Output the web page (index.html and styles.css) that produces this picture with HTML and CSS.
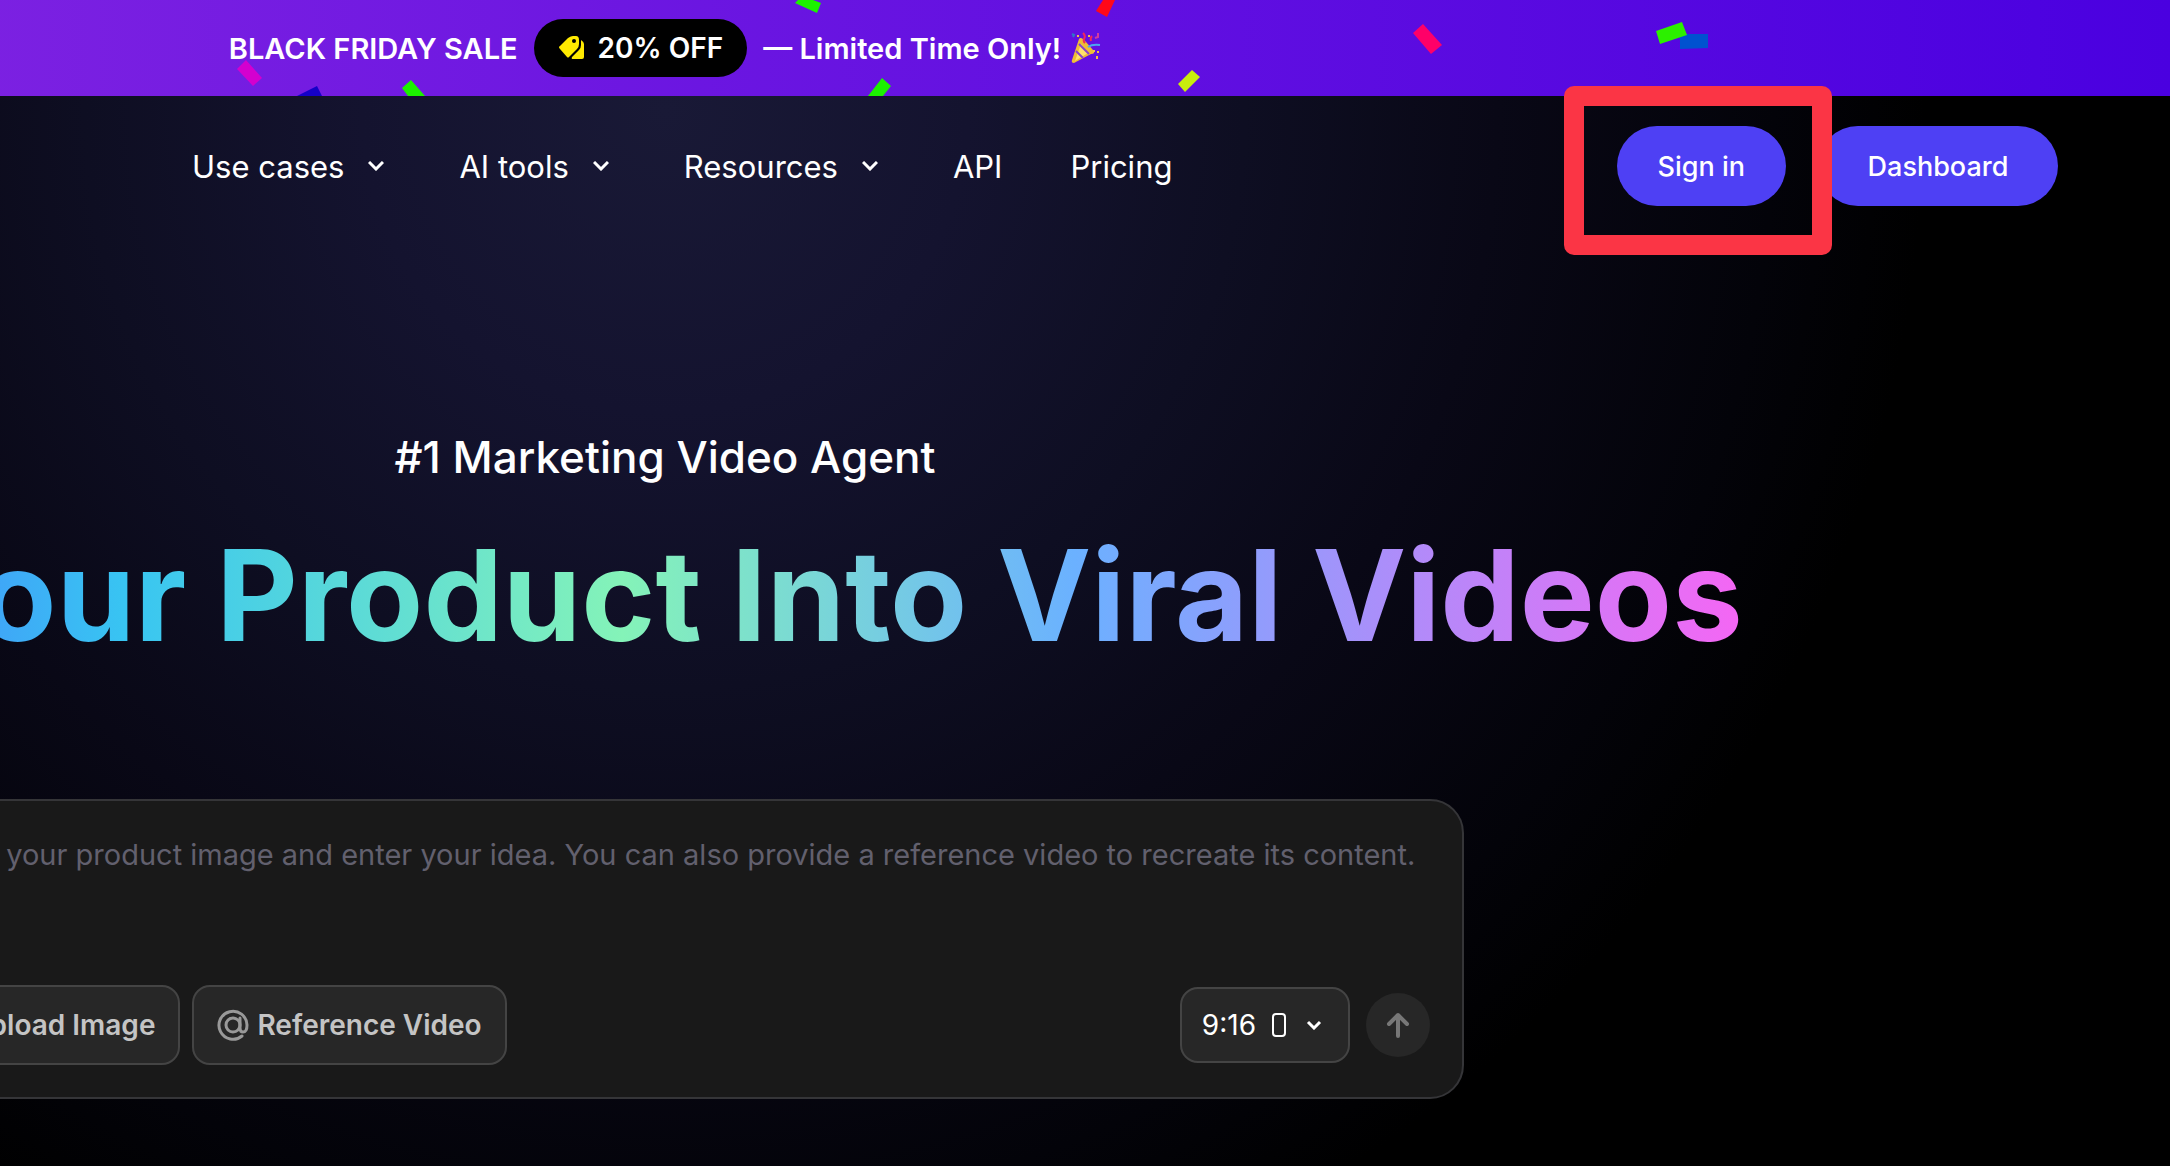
FILE: index.html
```html
<!DOCTYPE html>
<html lang="en">
  <head>
    <meta charset="UTF-8" />
    <meta name="viewport" content="width=device-width, initial-scale=1">
    <title>Marketing Video Agent</title>
    <link rel="stylesheet" href="styles.css">
  </head>
  <body>
    <div class="page">
      <div class="banner">
        <svg class="confetti" width="2170" height="96" viewBox="0 0 2170 96" aria-hidden="true">
          <path fill="#d400cf" d="M246 60 262 78 253 86 237 69z"/>
          <path fill="#1500c8" d="M297 96 317 86 322 96z"/>
          <path fill="#1cf200" d="M402 88 411 80 425 96 408 96z"/>
          <path fill="#1cf200" d="M795 3 798 0 813 0 821 3 817 13z"/>
          <path fill="#1cf200" d="M868 96 882 78 891 86 883 96z"/>
          <path fill="#ff0819" d="M1096 11 1103 0 1115 0 1107 17z"/>
          <path fill="#c8ee0c" d="M1178 84 1192 70 1200 77 1185 92z"/>
          <path fill="#ff0068" d="M1413 33 1423 24 1442 45 1431 54z"/>
          <path fill="#0052d0" d="M1680 34 1708 34 1708 48 1680 49z"/>
          <path fill="#2cf000" d="M1656 31 1682 22 1687 35 1660 44z"/>
        </svg>
        <p class="banner_txt">BLACK FRIDAY SALE</p>
        <span class="badge">
          <svg width="28" height="26" viewBox="0 0 28 26" aria-hidden="true">
            <path fill="#ffea00" d="M2 11 10 3Q13 1 15 1H18Q21 1 21 5V9Q21 12 19 14L11 22Q10 23 9 22L2 14Q0 12 2 11z"/>
            <path fill="#ffea00" d="M23 5Q26 7 26 9V22Q26 24 24 24H15Q13 24 14 22L21 15Q23 13 23 10z"/>
            <circle cx="16" cy="6" r="2" fill="#000"/>
          </svg>
          20% OFF
        </span>
        <p class="banner_txt">— Limited Time Only!
          <svg class="party" width="30" height="32" viewBox="0 0 30 32" aria-hidden="true">
            <path fill="#efbd35" d="M8 7Q10 4 15 10L22 18Q25 22 20 22L3 31Q0 31 1 28z"/>
            <path fill="#ffe36b" d="M10 12 17 21 4 29z"/>
            <path fill="none" stroke="#8b45c8" stroke-width="2" d="M8 12 18 22M5 19 12 26"/>
            <path fill="none" stroke="#f0285c" stroke-width="2" d="M12 1Q15 4 13 7Q12 9 14 11M20 9Q19 6 21 4"/>
            <path fill="none" stroke="#4da5ee" stroke-width="2" d="M17 15Q21 12 29 13"/>
            <path fill="none" stroke="#2d78c8" stroke-width="2" d="M1 2 3 3 2 5"/>
            <path fill="none" stroke="#d13a9d" stroke-width="2" d="M27 1V5L24 6"/>
            <path fill="#f2bf48" d="M6 3h2v2H6zM22 18h2v2h-2zM26 19h2v2h-2zM25 24h2v3h-2zM17 3h2v2h-2z"/>
          </svg>
        </p>
      </div>

      <header class="header">
        <nav class="nav">
          <a href="#">Use cases <svg class="arrow" width="16" height="10" viewBox="0 0 16 10" aria-hidden="true"><path d="M1 1 8 8 15 1"/></svg></a>
          <a href="#">AI tools <svg class="arrow" width="16" height="10" viewBox="0 0 16 10" aria-hidden="true"><path d="M1 1 8 8 15 1"/></svg></a>
          <a href="#">Resources <svg class="arrow" width="16" height="10" viewBox="0 0 16 10" aria-hidden="true"><path d="M1 1 8 8 15 1"/></svg></a>
          <a href="#">API</a>
          <a href="#">Pricing</a>
        </nav>
        <div class="user_menu">
          <div class="signin_wrap">
            <button type="button" class="btn">Sign in</button>
            <div class="mark"></div>
          </div>
          <button type="button" class="btn btn_wide">Dashboard</button>
        </div>
      </header>

      <main class="hero">
        <p class="sub_tit">#1 Marketing Video Agent</p>
        <h1 class="tit">Turn Your Product Into Viral Videos</h1>

        <form class="prompt">
          <textarea class="prompt_txt" rows="2" aria-label="Your idea" placeholder="Upload your product image and enter your idea. You can also provide a reference video to recreate its content."></textarea>
          <div class="prompt_bar">
            <button type="button" class="btn_opt">
              <svg width="36" height="32" viewBox="0 0 36 32" aria-hidden="true"><rect x="3" y="3" width="30" height="26" rx="4"/><path d="M4 24 13 15 24 28M20 21 25 16 32 23"/></svg>
              Upload Image
            </button>
            <button type="button" class="btn_opt">
              <svg width="32" height="32" viewBox="0 0 32 32" aria-hidden="true"><circle cx="16" cy="16" r="7"/><path d="M23 9V19Q23 23 26 23Q30 23 30 16A14 14 0 1 0 25 27"/></svg>
              Reference Video
            </button>
            <div class="send_wrap">
              <button type="button" class="btn_ratio">
                9:16
                <svg width="14" height="24" viewBox="0 0 14 24" aria-hidden="true"><rect x="1" y="1" width="12" height="22" rx="3"/></svg>
                <svg class="ratio_arrow" width="16" height="10" viewBox="0 0 16 10" aria-hidden="true"><path d="M2 2 8 8 14 2"/></svg>
              </button>
              <button type="submit" class="btn_send" aria-label="Send">
                <svg width="24" height="28" viewBox="0 0 24 28" aria-hidden="true"><path d="M12 25V4M3 13 12 4 21 13"/></svg>
              </button>
            </div>
          </div>
        </form>
      </main>
    </div>
  </body>
</html>
```

FILE: styles.css
```css
* {padding: 0; margin: 0; box-sizing: border-box;}
html, body {height: 100%;}
body {background: #000; color: #fff; font-family: Inter, "Liberation Sans", sans-serif; overflow: hidden;}
button {border: 0; font-family: inherit; color: inherit; cursor: pointer;}
a {color: inherit; text-decoration: none;}
svg {flex-shrink: 0;}

/* content is centred on the full page, which starts left of the window */
.page {min-height: 100%; margin-left: -840px; background: radial-gradient(circle 1260px at 50% 110px, #191936 0%, #14132f 24%, #0e0e22 46%, #090816 66%, #030309 88%, #000 100%);}

.banner {height: 96px; display: flex; align-items: center; justify-content: center; gap: 16px; position: relative; background: linear-gradient(90deg, #8e2de2, #4a00e0);}
.banner_txt {display: flex; align-items: center; gap: 10px; font-size: 29px; font-weight: 600;}
.badge {height: 58px; padding: 0 24px; display: flex; align-items: center; gap: 12px; border-radius: 29px; background: #000; font-size: 28px; font-weight: 600;}
.confetti {position: absolute; top: 0; left: 840px;}

.header {height: 140px; padding: 0 112px 0 1032px; display: flex; align-items: center; justify-content: space-between;}
.nav {display: flex; gap: 68px; font-size: 31px;}
.nav a {display: flex; align-items: center; gap: 24px;}
.arrow {margin-right: 7px; fill: none; stroke: #fff; stroke-width: 3;}
.user_menu {display: flex; gap: 32px;}
.btn {height: 80px; padding: 0 41px; border-radius: 40px; background: #4e40f4; font-size: 27px; font-weight: 500;}
.btn_wide {min-width: 240px;}
.signin_wrap {position: relative;}
.mark {position: absolute; top: -40px; left: -53px; right: -46px; bottom: -49px; border: 20px solid #fb3545; border-radius: 10px; pointer-events: none;}

.hero {padding-top: 191px; display: flex; flex-direction: column; align-items: center;}
.sub_tit {font-size: 44px; line-height: 60px; font-weight: 500;}
.tit {margin-top: 28px; font-size: 126px; line-height: 160px; font-weight: 700; white-space: nowrap; color: transparent; background: linear-gradient(90deg, #4f7cff 0%, #3fa7f7 19%, #38c5f2 25%, #84f3b8 48%, #6bb1ff 69%, #f566f4 100%); -webkit-background-clip: text; background-clip: text;}

.prompt {width: 1598px; margin-top: 124px; padding: 32px; border: 2px solid #353538; border-radius: 34px; background: #191919;}
.prompt_txt {width: 100%; display: block; border: 0; outline: 0; resize: none; overflow: hidden; background: none; color: #fff; font-family: inherit; font-size: 29px; line-height: 44px;}
.prompt_txt::placeholder {color: #62606e; opacity: 1;}
.prompt_bar {margin-top: 64px; display: flex; align-items: center; gap: 12px;}
.btn_opt {height: 80px; padding: 0 23px; display: flex; align-items: center; gap: 8px; border: 2px solid #444; border-radius: 18px; background: #272727; color: #c4c4c4; font-size: 28px; font-weight: 600;}
.btn_opt svg {fill: none; stroke: #999; stroke-width: 3; stroke-linecap: round;}
.send_wrap {margin-left: auto; display: flex; align-items: center; gap: 16px;}
.btn_ratio {height: 76px; padding: 0 26px 0 20px; display: flex; align-items: center; gap: 16px; border: 2px solid #444; border-radius: 18px; background: #272727; font-size: 28px;}
.btn_ratio svg {fill: none; stroke: #fff; stroke-width: 2;}
.btn_ratio .ratio_arrow {margin-left: 4px; stroke-width: 3;}
.btn_send {width: 64px; height: 64px; display: flex; align-items: center; justify-content: center; border-radius: 50%; background: #272727;}
.btn_send svg {fill: none; stroke: #777; stroke-width: 4; stroke-linecap: round; stroke-linejoin: round;}
```
